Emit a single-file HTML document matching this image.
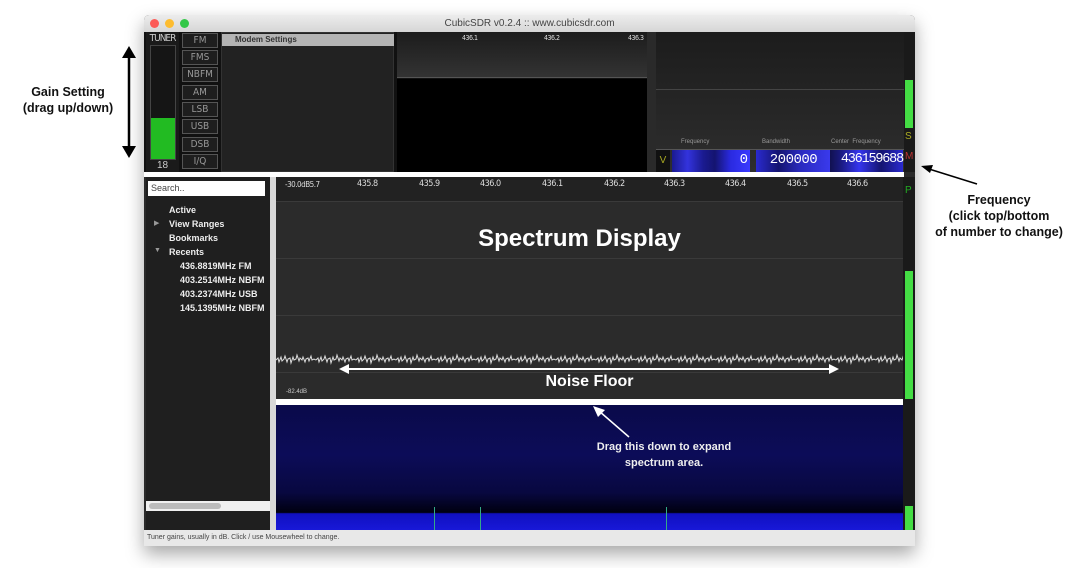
<!DOCTYPE html>
<html><head><meta charset="utf-8"><style>
*{margin:0;padding:0;box-sizing:border-box}
body{width:1073px;height:568px;background:#fff;position:relative;overflow:hidden;font-family:"Liberation Sans",sans-serif}
.a{position:absolute}
.win{left:144px;top:15px;width:771px;height:531px;background:#2a2a2a;box-shadow:0 8px 18px rgba(0,0,0,.35);border-radius:5px 5px 0 0;overflow:hidden}
.title{left:0;top:0;width:771px;height:17px;background:linear-gradient(#ececec,#d6d6d6);font-size:10px;color:#444;text-align:center;line-height:17px}
.dot{width:9px;height:9px;border-radius:50%;top:4px}
.mb{left:38px;width:36px;height:15px;border:1px solid #555;background:#1e1e1e;color:#999;font-size:10px;text-align:center;line-height:13px;font-family:"DejaVu Sans Condensed","DejaVu Sans",sans-serif}
.tk{font-size:9px;color:#ddd;top:4px;font-family:"DejaVu Sans Condensed",sans-serif;letter-spacing:-.5px}
.tree{font-size:9px;color:#eee;font-weight:bold}
.ann{font-weight:bold;color:#111;text-align:center;font-size:12.5px;line-height:16px}
.dig{color:#fff;font-size:14px;font-family:"Liberation Mono",monospace;white-space:nowrap}
</style></head><body>
<div class="a ann" style="left:6px;top:84px;width:124px">Gain Setting<br>(drag up/down)</div>
<svg class="a" style="left:118px;top:46px" width="22" height="112"><line x1="11" y1="8" x2="11" y2="104" stroke="#000" stroke-width="2.5"/><polygon points="11,0 4,12 18,12" fill="#000"/><polygon points="11,112 4,100 18,100" fill="#000"/></svg>
<div class="a ann" style="left:918px;top:192px;width:162px">Frequency<br>(click top/bottom<br>of number to change)</div>
<svg class="a" style="left:915px;top:160px" width="70" height="30"><line x1="62" y1="24" x2="14" y2="9" stroke="#000" stroke-width="1.5"/><polygon points="6,6 18,5 15,13" fill="#000"/></svg>

<div class="a win">
<div class="a title">CubicSDR v0.2.4 :: www.cubicsdr.com</div>
<div class="a dot" style="left:6px;background:#fc5b57"></div>
<div class="a dot" style="left:21px;background:#fdbc2f"></div>
<div class="a dot" style="left:36px;background:#33c748"></div>
<div class="a" style="left:0;top:17px;width:771px;height:140px;background:#111"></div>
<div class="a" style="left:2px;top:17px;width:33px;height:140px;background:#1a1a1a"></div>
<div class="a" style="left:2px;top:18px;width:33px;font-size:10px;color:#ccc;text-align:center;font-family:'DejaVu Sans Condensed',sans-serif;letter-spacing:-1px">TUNER</div>
<div class="a" style="left:6px;top:30px;width:26px;height:115px;border:1px solid #444;background:#151515"></div>
<div class="a" style="left:7px;top:103px;width:24px;height:41px;background:#22bb22"></div>
<div class="a" style="left:2px;top:145px;width:33px;font-size:10px;color:#ccc;text-align:center">18</div>
<div class="a mb" style="top:18px">FM</div><div class="a mb" style="top:35px">FMS</div><div class="a mb" style="top:52px">NBFM</div><div class="a mb" style="top:70px">AM</div><div class="a mb" style="top:87px">LSB</div><div class="a mb" style="top:104px">USB</div><div class="a mb" style="top:122px">DSB</div><div class="a mb" style="top:139px">I/Q</div>
<div class="a" style="left:77px;top:17px;width:173px;height:140px;background:#222;border:1px solid #333"></div>
<div class="a" style="left:78px;top:19px;width:172px;height:12px;background:#b4b4b4;font-size:8px;font-weight:bold;color:#333;padding-left:13px;line-height:12px">Modem Settings</div>
<div class="a" style="left:253px;top:17px;width:250px;height:46px;background:linear-gradient(#1c1c1c,#333);border-bottom:1px solid #555"></div>
<div class="a" style="left:253px;top:64px;width:250px;height:93px;background:#000"></div>
<div class="a tk" style="left:318px;top:19px;font-size:7px">436.1</div><div class="a tk" style="left:400px;top:19px;font-size:7px">436.2</div><div class="a tk" style="left:484px;top:19px;font-size:7px">436.3</div>
<div class="a" style="left:503px;top:17px;width:9px;height:140px;background:#2a2a2a"></div>
<div class="a" style="left:512px;top:17px;width:248px;height:140px;background:linear-gradient(#1c1c1c,#2e2e2e)"></div>
<div class="a" style="left:512px;top:74px;width:248px;height:1px;background:#444"></div>
<div class="a" style="left:537px;top:124px;font-size:6px;color:#999">Frequency</div>
<div class="a" style="left:618px;top:124px;font-size:6px;color:#999">Bandwidth</div>
<div class="a" style="left:687px;top:124px;font-size:6px;color:#999">Center &nbsp;Frequency</div>
<div class="a" style="left:512px;top:134px;width:248px;height:1px;background:#555"></div>
<div class="a" style="left:512px;top:135px;width:14px;height:22px;background:#111;color:#aa2;font-size:10px;line-height:22px;text-align:center">V</div>
<div class="a" style="left:528px;top:135px;width:78px;height:22px;background:linear-gradient(90deg,#1a1a90,#3333dd 20%,#1a1a90 40%,#141470 55%,#2a2ae0 75%,#3a3aff)"></div>
<div class="a dig" style="left:528px;top:137px;width:76px;text-align:right">0</div>
<div class="a" style="left:612px;top:135px;width:75px;height:22px;background:linear-gradient(90deg,#2a2ad0,#141470 30%,#2a2ac0 60%,#3a3aee)"></div>
<div class="a dig" style="left:612px;top:137px;width:75px;text-align:center;letter-spacing:-.5px">200000</div>
<div class="a" style="left:686px;top:135px;width:73px;height:22px;background:linear-gradient(90deg,#111150,#1a1a80 15%,#3535ee 40%,#141470 70%,#2a2ad0)"></div>
<div class="a dig" style="left:684px;top:137px;width:75px;text-align:right;letter-spacing:-1.2px;font-size:13.5px">436159688</div>
<div class="a" style="left:760px;top:17px;width:11px;height:140px;background:#1a1a1a"></div>
<div class="a" style="left:761px;top:65px;width:8px;height:48px;background:#44dd44"></div>
<div class="a" style="left:761px;top:116px;font-size:10px;color:#aa2">S</div>
<div class="a" style="left:761px;top:136px;font-size:10px;color:#b33">M</div>
<div class="a" style="left:0;top:157px;width:760px;height:5px;background:#fff"></div>
<div class="a" style="left:0;top:162px;width:771px;height:353px;background:#2a2a2a"></div>
<div class="a" style="left:2px;top:162px;width:124px;height:353px;background:#1f1f1f"></div>
<div class="a" style="left:126px;top:162px;width:6px;height:353px;background:#d8d8d8"></div>
<div class="a" style="left:4px;top:166px;width:117px;height:15px;background:#fff;font-size:9px;color:#444;padding:2px 3px">Search..</div>
<div class="a tree" style="left:25px;top:190px">Active</div>
<div class="a tree" style="left:25px;top:204px">View Ranges</div><div class="a" style="left:10px;top:204px;font-size:7px;color:#999">▶</div>
<div class="a tree" style="left:25px;top:218px">Bookmarks</div>
<div class="a tree" style="left:25px;top:232px">Recents</div><div class="a" style="left:10px;top:232px;font-size:7px;color:#999">▼</div>
<div class="a tree" style="left:36px;top:246px">436.8819MHz FM</div>
<div class="a tree" style="left:36px;top:260px;width:90px;overflow:hidden;white-space:nowrap">403.2514MHz NBFM</div>
<div class="a tree" style="left:36px;top:274px">403.2374MHz USB</div>
<div class="a tree" style="left:36px;top:288px;width:90px;overflow:hidden;white-space:nowrap">145.1395MHz NBFM</div>
<div class="a" style="left:2px;top:486px;width:124px;height:10px;background:#f0f0f0"></div>
<div class="a" style="left:5px;top:488px;width:72px;height:6px;border-radius:3px;background:#bbb"></div>
<div class="a" style="left:132px;top:162px;width:627px;height:222px;background:#2b2b2b"></div>
<div class="a" style="left:132px;top:162px;width:627px;height:24px;background:#222"></div>
<div class="a" style="left:132px;top:186px;width:627px;height:1px;background:#3a3a3a"></div>
<div class="a" style="left:132px;top:243px;width:627px;height:1px;background:#3a3a3a"></div>
<div class="a" style="left:132px;top:300px;width:627px;height:1px;background:#3a3a3a"></div>
<div class="a" style="left:132px;top:357px;width:627px;height:1px;background:#3a3a3a"></div>
<div class="a tk" style="left:141px;top:165px;font-size:8px">-30.0dB5.7</div>
<div class="a tk" style="left:213px;top:164px">435.8</div><div class="a tk" style="left:275px;top:164px">435.9</div><div class="a tk" style="left:336px;top:164px">436.0</div><div class="a tk" style="left:398px;top:164px">436.1</div><div class="a tk" style="left:460px;top:164px">436.2</div><div class="a tk" style="left:520px;top:164px">436.3</div><div class="a tk" style="left:581px;top:164px">436.4</div><div class="a tk" style="left:643px;top:164px">436.5</div><div class="a tk" style="left:703px;top:164px">436.6</div>
<div class="a" style="left:122px;top:210px;width:627px;text-align:center;color:#fff;font-weight:bold;font-size:24px">Spectrum Display</div>
<svg class="a" style="left:132px;top:330px" width="627" height="30"><defs><pattern id="n" width="40" height="30" patternUnits="userSpaceOnUse"><polyline fill="none" stroke="#ddd" stroke-width="1" points="0,15 2,13 3,17 5,12 6,16 8,14 9,11 11,17 12,14 14,13 15,18 17,12 18,15 20,14 21,10 23,16 24,13 26,15 27,12 29,17 30,14 32,13 33,16 35,11 36,15 38,14 40,15"/></pattern></defs><rect width="627" height="30" fill="url(#n)"/></svg>
<svg class="a" style="left:195px;top:348px" width="500" height="12"><line x1="8" y1="6" x2="492" y2="6" stroke="#fff" stroke-width="2"/><polygon points="0,6 10,1 10,11" fill="#fff"/><polygon points="500,6 490,1 490,11" fill="#fff"/></svg>
<div class="a" style="left:132px;top:358px;width:627px;text-align:center;color:#fff;font-weight:bold;font-size:16px">Noise Floor</div>
<div class="a" style="left:142px;top:374px;font-size:6px;color:#ccc">-82.4dB</div>
<div class="a" style="left:132px;top:384px;width:639px;height:6px;background:#fff"></div>
<div class="a" style="left:132px;top:390px;width:627px;height:125px;background:linear-gradient(#0a0a4a,#0c0c58 40%,#080840 70%,#000010 86%,#1010c0 87%,#1818d8)"></div>
<div class="a" style="left:290px;top:492px;width:1px;height:23px;background:#3a8"></div>
<div class="a" style="left:336px;top:492px;width:1px;height:23px;background:#3a8"></div>
<div class="a" style="left:522px;top:492px;width:1px;height:23px;background:#3a8"></div>
<svg class="a" style="left:445px;top:390px" width="50" height="36"><line x1="40" y1="32" x2="10" y2="6" stroke="#fff" stroke-width="1.5"/><polygon points="4,1 16,5 9,12" fill="#fff"/></svg>
<div class="a" style="left:400px;top:424px;width:240px;text-align:center;color:#eee;font-weight:bold;font-size:11px;line-height:16px">Drag this down to expand<br>spectrum area.</div>
<div class="a" style="left:759px;top:162px;width:12px;height:353px;background:#1a1a1a"></div>
<div class="a" style="left:761px;top:170px;font-size:10px;color:#2a2">P</div>
<div class="a" style="left:761px;top:256px;width:8px;height:128px;background:#44dd44"></div>
<div class="a" style="left:761px;top:491px;width:8px;height:24px;background:#44dd44"></div>
<div class="a" style="left:0;top:515px;width:771px;height:16px;background:#e8e8e8;font-size:7px;color:#444;padding:4px 3px">Tuner gains, usually in dB. Click / use Mousewheel to change.</div>
</div>
</body></html>
